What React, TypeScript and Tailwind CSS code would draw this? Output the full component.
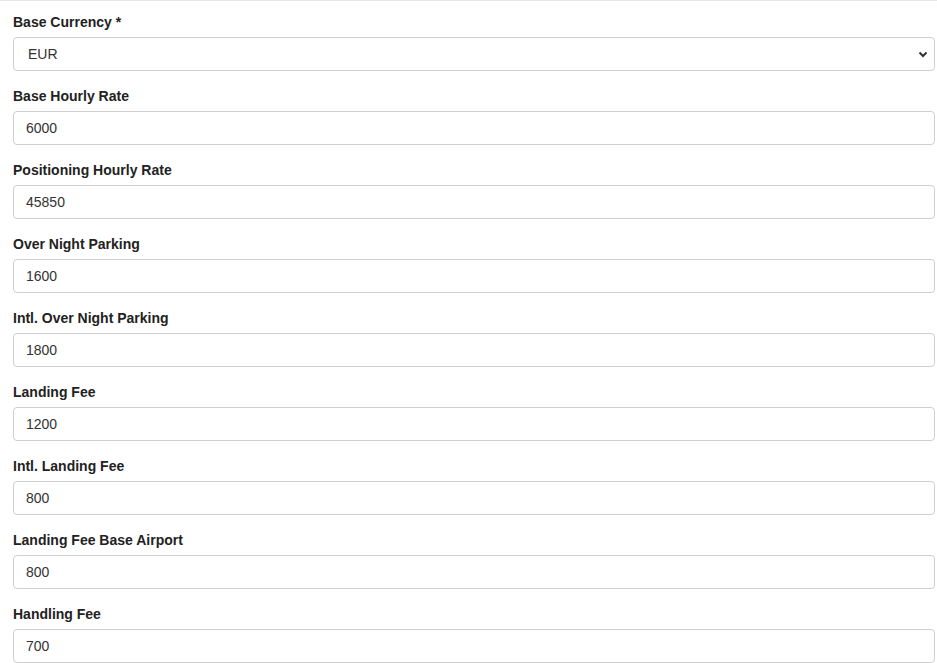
import React from "react";

const fields: { label: string; value: string }[] = [
  { label: "Base Hourly Rate", value: "6000" },
  { label: "Positioning Hourly Rate", value: "45850" },
  { label: "Over Night Parking", value: "1600" },
  { label: "Intl. Over Night Parking", value: "1800" },
  { label: "Landing Fee", value: "1200" },
  { label: "Intl. Landing Fee", value: "800" },
  { label: "Landing Fee Base Airport", value: "800" },
  { label: "Handling Fee", value: "700" },
];

export default function App() {
  return (
    <div className="min-h-screen border-t border-[#e5e5e5] bg-white pl-[13px] pr-[2px] pt-[12px] font-['Liberation_Sans',Arial,sans-serif] text-[14px] text-[#333]">
      <div className="mb-[16px]">
        <label className="mb-[6px] block text-[14px] font-bold leading-[18px] text-[#222]">Base Currency *</label>
        <div className="relative">
          <select
            defaultValue="EUR"
            className="block h-[34px] w-full appearance-none rounded-[4px] border border-[#cfcfcf] bg-white pl-[14px] text-[14px] text-[#333] outline-none"
          >
            <option>EUR</option>
            <option>USD</option>
            <option>GBP</option>
          </select>
          <svg
            className="pointer-events-none absolute right-[7px] top-1/2 h-[10px] w-[10px] -translate-y-1/2"
            viewBox="0 0 10 10"
            fill="none"
            stroke="#333"
            strokeWidth="2"
          >
            <path d="M1.5 3.5 5 7l3.5-3.5" />
          </svg>
        </div>
      </div>
      {fields.map((f) => (
        <div key={f.label} className="mb-[16px]">
          <label className="mb-[6px] block text-[14px] font-bold leading-[18px] text-[#222]">{f.label}</label>
          <input
            defaultValue={f.value}
            className="block h-[34px] w-full rounded-[4px] border border-[#cfcfcf] bg-white px-[12px] text-[14px] text-[#333] outline-none"
          />
        </div>
      ))}
    </div>
  );
}
